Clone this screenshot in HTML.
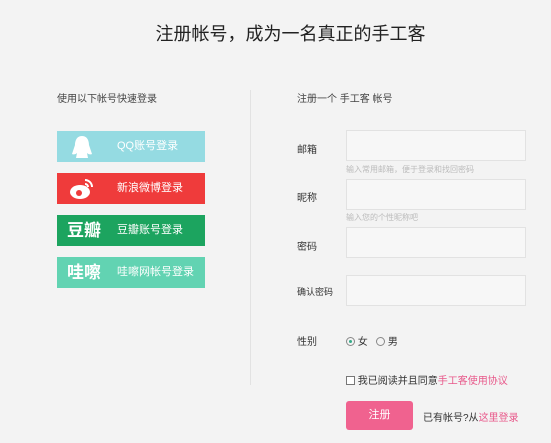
<!DOCTYPE html>
<html><head><meta charset="utf-8"><style>
*{margin:0;padding:0;box-sizing:border-box}
body{width:551px;height:443px;background:#f3f3f3;font-family:"Liberation Sans","Noto Sans CJK SC",sans-serif;position:relative;overflow:hidden;color:#333}
.a{position:absolute;white-space:nowrap}
.btn{position:absolute;left:57px;width:148px;height:31px;color:#fff;font-size:11px;line-height:31px}
.btn .t{position:absolute;left:60px}
.btn .i{position:absolute;left:10px;font-weight:bold;font-size:17px}
.in{position:absolute;left:346px;width:180px;height:31px;background:#f7f7f7;border:1px solid #e2e2e2}
.lb{position:absolute;left:297px;font-size:10px;color:#333}
.hint{position:absolute;left:346px;font-size:8px;color:#bbb}
</style></head><body>
<div class="a" style="left:0;width:551px;text-align:center;top:20px;font-size:18px;color:#222;padding-left:30px">注册帐号，成为一名真正的手工客</div>
<div class="a" style="left:57px;top:90px;font-size:10px;color:#444">使用以下帐号快速登录</div>
<div style="position:absolute;left:250px;top:90px;width:1px;height:295px;background:#e2e2e2"></div>
<div class="btn" style="top:131px;background:#95dbe2"><svg style="position:absolute;left:14px;top:4px" width="22" height="24" viewBox="0 0 22 24"><path d="M11 1C5 1 4 7 4 10L1 19C3 20 5 19 6 18L5 23H17L16 18C17 19 19 20 21 19L18 10C18 7 17 1 11 1Z" fill="#fff"/></svg><span class="t">QQ账号登录</span></div>
<div class="btn" style="top:173px;background:#ef3b3b"><svg style="position:absolute;left:12px;top:3px" width="26" height="25" viewBox="0 0 26 25"><ellipse cx="11" cy="16" rx="10" ry="7" fill="#fff"/><circle cx="10" cy="17" r="3" fill="#ef3b3b"/><path d="M16 4A7 7 0 0 1 23 11M16 8A3 3 0 0 1 19 11" stroke="#fff" stroke-width="2" fill="none"/></svg><span class="t">新浪微博登录</span></div>
<div class="btn" style="top:215px;background:#1ca45f"><span class="i">豆瓣</span><span class="t">豆瓣账号登录</span></div>
<div class="btn" style="top:257px;background:#62d3b2"><span class="i">哇嚓</span><span class="t">哇嚓网帐号登录</span></div>
<div class="a" style="left:297px;top:90px;font-size:10px;color:#444">注册一个 手工客 帐号</div>
<div class="lb" style="top:141px">邮箱</div><div class="in" style="top:130px"></div>
<div class="hint" style="top:164px">输入常用邮箱，便于登录和找回密码</div>
<div class="lb" style="top:189px">昵称</div><div class="in" style="top:179px"></div>
<div class="hint" style="top:212px">输入您的个性昵称吧</div>
<div class="lb" style="top:238px">密码</div><div class="in" style="top:227px"></div>
<div class="lb" style="top:285px;font-size:9px">确认密码</div><div class="in" style="top:275px"></div>
<div class="lb" style="top:333px">性别</div>
<div class="a" style="left:346px;top:333px;font-size:10px"><span style="display:inline-block;width:9px;height:9px;border:1px solid #888;border-radius:50%;vertical-align:-1px;position:relative"><span style="position:absolute;left:2px;top:2px;width:3px;height:3px;background:#3a8;border-radius:50%"></span></span> 女 &nbsp;&nbsp;<span style="display:inline-block;width:9px;height:9px;border:1px solid #888;border-radius:50%;vertical-align:-1px"></span> 男</div>
<div class="a" style="left:346px;top:372px;font-size:10px"><span style="display:inline-block;width:9px;height:9px;border:1px solid #777;vertical-align:-1px;background:#fff"></span> 我已阅读并且同意<span style="color:#e8588a">手工客使用协议</span></div>
<div style="position:absolute;left:346px;top:401px;width:67px;height:29px;background:#f0628f;border-radius:3px;color:#fff;font-size:11px;text-align:center;line-height:29px">注册</div>
<div class="a" style="left:423px;top:409px;font-size:10px">已有帐号?从<span style="color:#e8588a">这里登录</span></div>
</body></html>
